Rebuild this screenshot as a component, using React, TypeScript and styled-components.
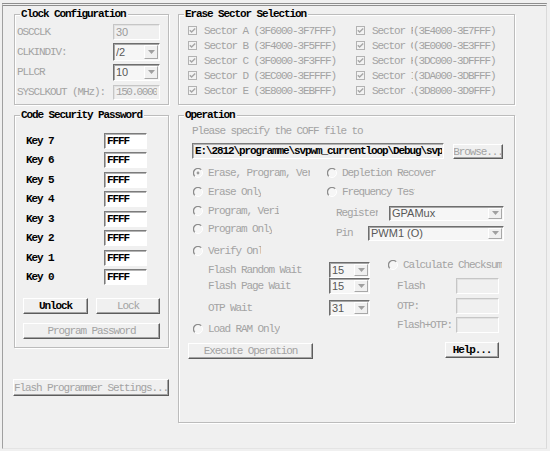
import styled, { createGlobalStyle } from "styled-components";

const GlobalStyle = createGlobalStyle`
  *, *::before, *::after { box-sizing: border-box; }
  html, body { margin: 0; padding: 0; background: #f0f0f0; }
  body {
    font-family: "Liberation Mono", "DejaVu Sans Mono", monospace;
    font-size: 11px;
    letter-spacing: -1.1px;
    color: #a3a3a3;
  }
`;

const Page = styled.div`
  width: 550px;
  height: 451px;
  overflow: hidden;
  padding: 3px 3px 0 2px;
`;

const Frame = styled.div`
  height: 446px;
  border-top: 3px double #8e8e8e;
  border-left: 1px solid #a0a0a0;
  border-right: 1px solid #dadada;
  border-bottom: 1px solid #e4e4e4;
  display: flex;
  gap: 9px;
  padding: 8px 0 0 11px;
`;

const Column = styled.div<{ $w: number }>`
  width: ${(p) => p.$w}px;
  flex-shrink: 0;
  display: flex;
  flex-direction: column;
`;

const Group = styled.div<{ $h: number; $mb?: number }>`
  height: ${(p) => p.$h}px;
  margin-bottom: ${(p) => p.$mb ?? 0}px;
  border: 1px solid #bcbcbc;
  box-shadow: 1px 1px 0 #fff, inset 1px 1px 0 #fff;
  display: flex;
  flex-direction: column;
`;

const Legend = styled.div`
  align-self: flex-start;
  margin: -7px 0 0 5px;
  padding: 0 2px 0 1px;
  height: 12px;
  line-height: 12px;
  background: #f0f0f0;
  color: #000;
  font-weight: bold;
  white-space: nowrap;
`;

const Label = styled.span<{ $dark?: boolean; $clip?: number }>`
  display: block;
  white-space: nowrap;
  overflow: hidden;
  line-height: 12px;
  flex-shrink: 0;
  ${(p) => (p.$clip ? `width: ${p.$clip}px;` : "")}
  color: ${(p) => (p.$dark ? "#000" : "#a3a3a3")};
  font-weight: ${(p) => (p.$dark ? "bold" : "normal")};
`;

const Edit = styled.div<{ $w: number; $h?: number; $white?: boolean; $soft?: boolean; $dark?: boolean }>`
  width: ${(p) => p.$w}px;
  height: ${(p) => p.$h ?? 16}px;
  display: flex;
  align-items: center;
  padding: 0 1px 0 2px;
  overflow: hidden;
  white-space: nowrap;
  border: 1px solid;
  border-color: ${(p) => (p.$soft ? "#c6c6c6 #fff #fff #c6c6c6" : "#7c7c7c #fff #fff #7c7c7c")};
  box-shadow: inset 1px 1px 0 ${(p) => (p.$soft ? "#e2e2e2" : "#b4b4b4")};
  background: ${(p) => (p.$white ? "#fff" : "#f0f0f0")};
  color: ${(p) => (p.$dark ? "#000" : "#a3a3a3")};
  font-weight: ${(p) => (p.$dark ? "bold" : "normal")};
`;

const EditText = styled.span<{ $tight?: boolean }>`
  display: block;
  min-width: 0;
  overflow: hidden;
  white-space: nowrap;
  line-height: 12px;
  letter-spacing: ${(p) => (p.$tight ? "-1.45px" : "inherit")};
`;

const SansValue = styled.span`
  font-family: "Liberation Sans", Arial, sans-serif;
  letter-spacing: 0;
  font-size: 11px;
  color: #9a9a9a;
`;

const Combo = styled.div<{ $w: number; $h?: number }>`
  width: ${(p) => p.$w}px;
  height: ${(p) => p.$h ?? 16}px;
  display: flex;
  border: 1px solid;
  border-color: #6e6e6e #fff #fff #6e6e6e;
  box-shadow: inset 1px 1px 0 #a6a6a6;
  background: #f6f6f6;
  padding: 1px 1px 1px 2px;
`;

const ComboValue = styled.span`
  flex: 1;
  display: flex;
  align-items: center;
  overflow: hidden;
  white-space: nowrap;
  font-family: "Liberation Sans", Arial, sans-serif;
  letter-spacing: 0;
  font-size: 11px;
  color: #585858;
`;

const ComboArrow = styled.span`
  width: 14px;
  flex-shrink: 0;
  display: flex;
  align-items: center;
  justify-content: center;
  border: 1px solid;
  border-color: #fff #a8a8a8 #a8a8a8 #fff;
  background: #f0f0f0;
`;

const Button = styled.button<{ $w: number; $h?: number; $dark?: boolean }>`
  width: ${(p) => p.$w}px;
  height: ${(p) => p.$h ?? 16}px;
  flex-shrink: 0;
  padding: 0;
  display: flex;
  align-items: center;
  justify-content: center;
  overflow: hidden;
  white-space: nowrap;
  font: inherit;
  letter-spacing: inherit;
  background: #f0f0f0;
  border: 1px solid;
  border-color: #fff #5c5c5c #5c5c5c #fff;
  box-shadow: inset -1px -1px 0 #a4a4a4;
  color: ${(p) => (p.$dark ? "#000" : "#a3a3a3")};
  font-weight: ${(p) => (p.$dark ? "bold" : "normal")};
`;

/* clock configuration */
const ClockGrid = styled.div`
  display: grid;
  grid-template-columns: 1fr 47px;
  grid-auto-rows: 20px;
  align-items: center;
  padding: 2px 8px 0 2px;
`;

/* erase sectors */
const SectorGrid = styled.div`
  display: grid;
  grid-template-columns: 168px auto;
  grid-auto-rows: 15px;
  align-items: center;
  padding: 3px 0 0 9px;
`;

const Sector = styled.div`
  display: flex;
  align-items: center;
`;

const Tick = styled.span`
  display: flex;
  margin-right: 7px;
`;

/* code security */
const SecurityBody = styled.div`
  display: flex;
  flex-direction: column;
  padding: 10px 0 0 8px;
`;

const KeyGrid = styled.div`
  display: grid;
  grid-template-columns: 78px 43px;
  grid-auto-rows: 19.5px;
  align-items: center;
  margin-left: 3px;
`;

const ButtonRow = styled.div`
  display: flex;
  gap: 8px;
  margin-top: 11px;
`;

const Stack = styled.div<{ $mt?: number; $ml?: number }>`
  margin-top: ${(p) => p.$mt ?? 0}px;
  margin-left: ${(p) => p.$ml ?? 0}px;
`;

/* operation */
const OperationBody = styled.div`
  display: flex;
  flex-direction: column;
  padding: 4px 0 0 13px;
`;

const PathRow = styled.div`
  display: flex;
  align-items: flex-start;
  gap: 9px;
  margin-top: 6px;
`;

const Split = styled.div<{ $mt?: number }>`
  display: flex;
  margin-top: ${(p) => p.$mt ?? 0}px;
`;

const Pane = styled.div<{ $w?: number; $pt?: number }>`
  ${(p) => (p.$w ? `width: ${p.$w}px; flex-shrink: 0;` : "flex: 1;")}
  padding-top: ${(p) => p.$pt ?? 0}px;
  display: flex;
  flex-direction: column;
`;

const RadioRow = styled.div<{ $h: number; $ml?: number; $mt?: number }>`
  height: ${(p) => p.$h}px;
  margin-left: ${(p) => p.$ml ?? 0}px;
  margin-top: ${(p) => p.$mt ?? 0}px;
  display: flex;
  align-items: center;
  gap: 5px;
`;

const PickRow = styled.div<{ $cols: string; $mt?: number }>`
  display: grid;
  grid-template-columns: ${(p) => p.$cols};
  height: 20px;
  align-items: center;
  margin-top: ${(p) => p.$mt ?? 0}px;
  margin-left: 9px;
`;

const WaitRow = styled.div<{ $mt?: number }>`
  display: grid;
  grid-template-columns: 121px 41px;
  height: 16px;
  align-items: center;
  margin: ${(p) => p.$mt ?? 0}px 0 0 16px;
`;

const SumRow = styled.div<{ $mt?: number }>`
  display: grid;
  grid-template-columns: 59px 43px;
  height: 16px;
  align-items: center;
  margin: ${(p) => p.$mt ?? 0}px 0 0 9px;
`;

const CheckIcon = () => (
  <svg width="9" height="9" viewBox="0 0 9 9">
    <rect x="0.5" y="0.5" width="8" height="8" fill="#f3f3f3" stroke="#b2b2b2" />
    <path d="M1.8 4.2 L3.6 6.1 L7.2 2.4" stroke="#a6a6a6" strokeWidth="1.4" fill="none" />
  </svg>
);

const RadioIcon = ({ on }: { on?: boolean }) => (
  <svg width="10" height="10" viewBox="0 0 10 10">
    <circle cx="5" cy="5" r="4.5" fill="#f6f6f6" />
    <path d="M1.8 8.2 A4.5 4.5 0 0 1 8.2 1.8" stroke="#8c8c8c" strokeWidth="1.3" fill="none" />
    <path d="M8.2 1.8 A4.5 4.5 0 0 1 1.8 8.2" stroke="#ffffff" strokeWidth="1" fill="none" />
    {on && <circle cx="5" cy="5" r="1.4" fill="#9c9c9c" />}
  </svg>
);

const Arrow = () => (
  <svg width="7" height="4" viewBox="0 0 7 4">
    <path d="M0 0 H7 L3.5 4 Z" fill="#a0a0a0" />
  </svg>
);

const Select = ({ w, h, value }: { w: number; h?: number; value: string }) => (
  <Combo $w={w} $h={h}>
    <ComboValue>{value}</ComboValue>
    <ComboArrow>
      <Arrow />
    </ComboArrow>
  </Combo>
);

const Radio = ({ text, clip, on, h, ml, mt }: { text: string; clip?: number; on?: boolean; h: number; ml?: number; mt?: number }) => (
  <RadioRow $h={h} $ml={ml} $mt={mt}>
    <RadioIcon on={on} />
    <Label $clip={clip}>{text}</Label>
  </RadioRow>
);

const sectors = [
  ["Sector A", "(3F6000-3F7FFF)", "Sector F", "(3E4000-3E7FFF)"],
  ["Sector B", "(3F4000-3F5FFF)", "Sector G", "(3E0000-3E3FFF)"],
  ["Sector C", "(3F0000-3F3FFF)", "Sector H", "(3DC000-3DFFFF)"],
  ["Sector D", "(3EC000-3EFFFF)", "Sector I", "(3DA000-3DBFFF)"],
  ["Sector E", "(3E8000-3EBFFF)", "Sector J", "(3D8000-3D9FFF)"],
];

const keys = [7, 6, 5, 4, 3, 2, 1, 0];

export default function App() {
  return (
    <Page>
      <GlobalStyle />
      <Frame>
        <Column $w={155}>
          <Group $h={91} $mb={10}>
            <Legend>Clock Configuration</Legend>
            <ClockGrid>
              <Label>OSCCLK</Label>
              <Edit $w={47} $soft>
                <SansValue>30</SansValue>
              </Edit>
              <Label>CLKINDIV:</Label>
              <Select w={47} h={18} value="/2" />
              <Label>PLLCR</Label>
              <Select w={47} h={17} value="10" />
              <Label>SYSCLKOUT (MHz):</Label>
              <Edit $w={47} $h={15} $soft>
                <EditText $tight>150.0000</EditText>
              </Edit>
            </ClockGrid>
          </Group>

          <Group $h={233}>
            <Legend>Code Security Password</Legend>
            <SecurityBody>
              <KeyGrid>
                {keys.map((k) => (
                  <>
                    <Label key={`l${k}`} $dark>
                      Key {k}
                    </Label>
                    <Edit key={`e${k}`} $w={43} $white $dark>
                      FFFF
                    </Edit>
                  </>
                ))}
              </KeyGrid>
              <ButtonRow>
                <Button $w={65} $dark>
                  Unlock
                </Button>
                <Button $w={64}>Lock</Button>
              </ButtonRow>
              <Stack $mt={9}>
                <Button $w={137}>Program Password</Button>
              </Stack>
            </SecurityBody>
          </Group>

          <Stack $mt={31} $ml={-1}>
            <Button $w={156} $h={17}>
              Flash Programmer Settings...
            </Button>
          </Stack>
        </Column>

        <Column $w={337}>
          <Group $h={91} $mb={10}>
            <Legend>Erase Sector Selection</Legend>
            <SectorGrid>
              {sectors.map(([a, ar, b, br]) => (
                <>
                  <Sector key={a}>
                    <Tick>
                      <CheckIcon />
                    </Tick>
                    <Label>
                      {a} {ar}
                    </Label>
                  </Sector>
                  <Sector key={b}>
                    <Tick>
                      <CheckIcon />
                    </Tick>
                    <Label $clip={41}>{b}</Label>
                    <Label $clip={85}>{br}</Label>
                  </Sector>
                </>
              ))}
            </SectorGrid>
          </Group>

          <Group $h={308}>
            <Legend>Operation</Legend>
            <OperationBody>
              <Label>Please specify the COFF file to</Label>
              <PathRow>
                <Edit $w={252} $dark>
                  <EditText>E:\2812\programme\svpwm_currentloop\Debug\svpwm_currentloop.out</EditText>
                </Edit>
                <Stack $mt={1}>
                  <Button $w={50} $h={15}>
                    Browse...
                  </Button>
                </Stack>
              </PathRow>

              <Split $mt={5}>
                <Pane $w={135}>
                  <Radio h={18.7} ml={1} on text="Erase, Program, Verify" clip={102} />
                  <Radio h={18.7} ml={1} text="Erase Only" clip={53} />
                  <Radio h={18.7} ml={1} text="Program, Verify" clip={71} />
                  <Radio h={18.7} ml={1} text="Program Only" clip={64} />
                </Pane>
                <Pane>
                  <Radio h={18.7} text="Depletion Recover" />
                  <Radio h={18.7} text="Frequency Test" clip={73} />
                  <PickRow $cols="53px 115px" $mt={2}>
                    <Label $clip={42}>Register</Label>
                    <Select w={115} h={15} value="GPAMux" />
                  </PickRow>
                  <PickRow $cols="32px 136px">
                    <Label>Pin</Label>
                    <Select w={136} h={15} value="PWM1 (O)" />
                  </PickRow>
                </Pane>
              </Split>

              <Split>
                <Pane $w={196}>
                  <Radio h={16} ml={1} text="Verify Only" clip={53} />
                  <WaitRow $mt={3}>
                    <Label>Flash Random Wait</Label>
                    <Select w={41} value="15" />
                  </WaitRow>
                  <WaitRow>
                    <Label>Flash Page Wait</Label>
                    <Select w={41} value="15" />
                  </WaitRow>
                  <WaitRow $mt={6}>
                    <Label>OTP Wait</Label>
                    <Select w={41} value="31" />
                  </WaitRow>
                  <Radio h={16} ml={1} mt={5} text="Load RAM Only" />
                  <Stack $mt={6} $ml={-4}>
                    <Button $w={125}>Execute Operation</Button>
                  </Stack>
                </Pane>
                <Pane $pt={14}>
                  <Radio h={16} text="Calculate Checksum" />
                  <SumRow $mt={5}>
                    <Label>Flash</Label>
                    <Edit $w={43} $soft />
                  </SumRow>
                  <SumRow $mt={4}>
                    <Label>OTP:</Label>
                    <Edit $w={43} $soft />
                  </SumRow>
                  <SumRow $mt={3}>
                    <Label>Flash+OTP:</Label>
                    <Edit $w={43} $soft />
                  </SumRow>
                  <Stack $mt={9} $ml={57}>
                    <Button $w={54} $dark>
                      Help...
                    </Button>
                  </Stack>
                </Pane>
              </Split>
            </OperationBody>
          </Group>
        </Column>
      </Frame>
    </Page>
  );
}
